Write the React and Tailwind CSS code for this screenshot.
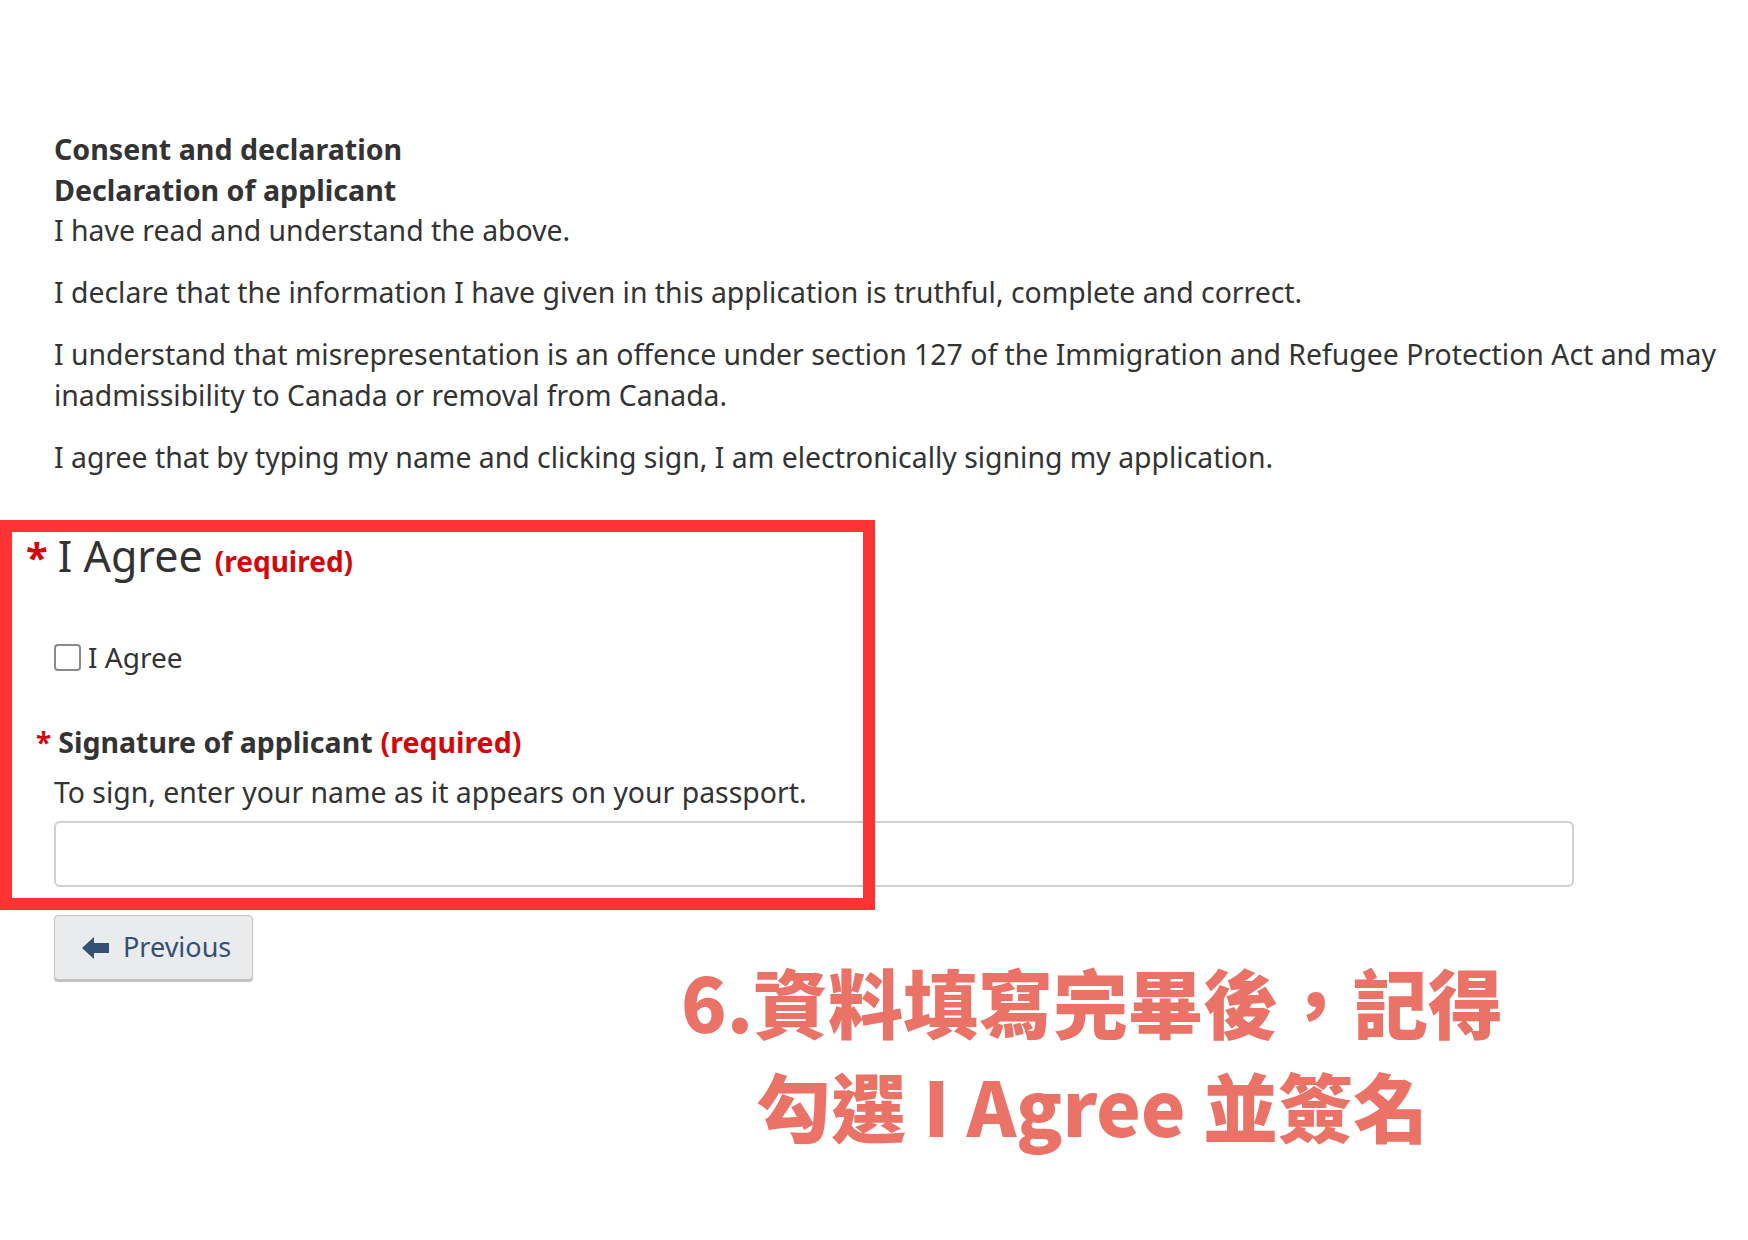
export default function App() {
  return (
    <div className="relative h-[1240px] w-[1748px] overflow-hidden bg-white font-['Noto_Sans','Liberation_Sans',sans-serif] text-[#333]">
      {/* Declaration text */}
      <div className="pl-[54px] pt-[128px]">
        <div className="text-[28.6px] leading-[41px] font-bold">
          <div>Consent and declaration</div>
          <div>Declaration of applicant</div>
        </div>
        <p className="text-[28.4px] leading-[41px]">I have read and understand the above.</p>
        <p className="mt-[21px] text-[28.4px] leading-[41px]">
          I declare that the information I have given in this application is truthful, complete and correct.
        </p>
        <p className="mt-[21px] text-[28.4px] leading-[41px] whitespace-nowrap">
          I understand that misrepresentation is an offence under section 127 of the Immigration and Refugee Protection Act and may
          <br />
          inadmissibility to Canada or removal from Canada.
        </p>
        <p className="mt-[21px] text-[28.4px] leading-[41px]">
          I agree that by typing my name and clicking sign, I am electronically signing my application.
        </p>

        {/* I Agree */}
        <div className="mt-[50px] -ml-[28px] flex items-baseline h-[56px] leading-[56px]">
          <span className="text-[40px] font-bold text-[#d3080c] mr-[10px]">*</span>
          <span className="text-[43px] text-[#333]">I Agree</span>
          <span className="ml-[12px] text-[28px] font-bold text-[#d3080c]">(required)</span>
        </div>

        <label className="mt-[53px] flex items-center h-[41px]">
          <span className="w-[27px] h-[27px] rounded-[4px] border-2 border-[#8a8a8a] bg-white" />
          <span className="ml-[7px] text-[28px] leading-[41px]">I Agree</span>
        </label>

        {/* Signature */}
        <div className="mt-[44px] -ml-[18px] flex items-baseline h-[41px] leading-[41px] font-bold">
          <span className="text-[28px] text-[#d3080c] mr-[7px]">*</span>
          <span className="text-[28.5px]">Signature of applicant</span>
          <span className="ml-[8px] text-[28.5px] text-[#d3080c]">(required)</span>
        </div>
        <p className="mt-[9px] text-[28.4px] leading-[41px]">To sign, enter your name as it appears on your passport.</p>
        <div className="mt-[8px] w-[1520px] h-[66px] rounded-[6px] border-2 border-[#d0d0d0] bg-white" />

        <div className="flex items-start">
          <button className="mt-[28px] flex items-center w-[199px] h-[65px] rounded-[4px] border border-[#c4c4c4] bg-[#eaebed] shadow-[0_2px_1px_rgba(0,0,0,0.25)] pl-[27px]">
            <svg width="27" height="22" viewBox="0 0 27 22">
              <path d="M0 11 L12 0 L12 6 L27 6 L27 16 L12 16 L12 22 Z" fill="#335075" />
            </svg>
            <span className="ml-[14px] text-[27px] text-[#335075]">Previous</span>
          </button>
          <div className="ml-[389px] mt-[62px] w-[900px] text-center font-['Noto_Sans_CJK_TC',sans-serif] font-black text-[75px] leading-[104px] text-[#ea7267]">
            <div>6.資料填寫完畢後，記得</div>
            <div>勾選 I Agree 並簽名</div>
          </div>
        </div>
      </div>

      {/* Red highlight box */}
      <div className="absolute left-0 top-[520px] w-[875px] h-[390px] border-[12px] border-[#ff3333]" />
    </div>
  );
}
